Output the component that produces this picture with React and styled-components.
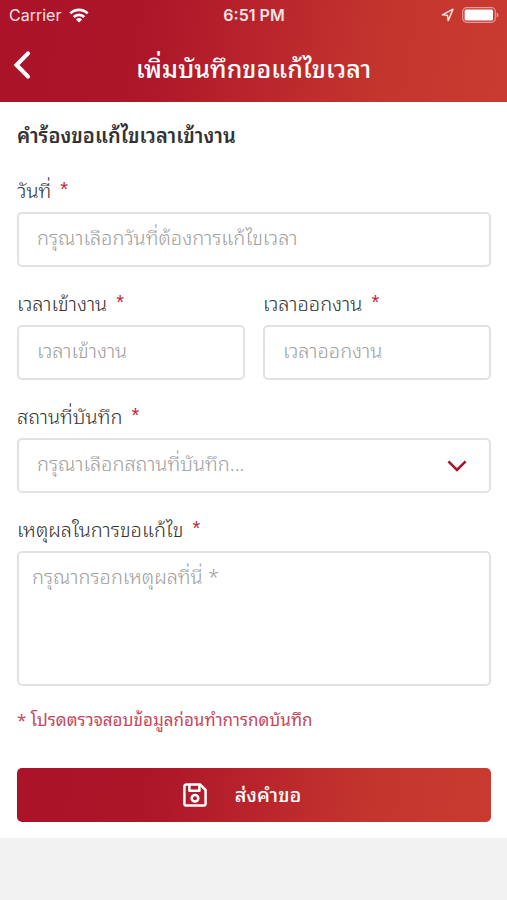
import React from "react";
import styled, { createGlobalStyle } from "styled-components";

const brandGradient = "linear-gradient(100deg, #ab1329 0%, #ad1529 28%, #b9242c 50%, #c4352e 75%, #c93a30 100%)";

const GlobalStyle = createGlobalStyle`
  * { box-sizing: border-box; }
  body {
    margin: 0;
    background: #f2f2f2;
    font-family: "Noto Sans Thai Looped", "Loma", "Liberation Sans", sans-serif;
    font-weight: 300;
    color: #333;
  }
  input, select, textarea, button { font: inherit; margin: 0; }
`;

const Header = styled.header`
  background: ${brandGradient};
  color: #fff;
`;

const StatusBar = styled.div`
  display: grid;
  grid-template-columns: 1fr auto 1fr;
  align-items: center;
  height: 30px;
  padding: 0 8px 0 9px;
  font-family: "Inter", sans-serif;
  font-size: 16px;
  font-weight: 400;
  line-height: 20px;
  color: #fbe3e4;
`;

const StatusGroup = styled.div`
  display: flex;
  align-items: center;
  justify-content: ${(p) => (p.$end ? "flex-end" : "flex-start")};
  gap: 8px;
`;

const Clock = styled.time`
  font-weight: 600;
`;

const NavBar = styled.div`
  display: grid;
  grid-template-columns: 44px 1fr 44px;
  align-items: center;
  height: 72px;
`;

const BackButton = styled.button`
  display: flex;
  justify-content: flex-start;
  align-items: center;
  height: 44px;
  padding: 0 0 0 12px;
  margin-bottom: 2px;
  border: 0;
  background: none;
  color: inherit;
`;

const Title = styled.h1`
  margin: 0;
  padding-top: 2px;
  font-size: 25px;
  line-height: 40px;
  font-weight: 500;
  text-align: center;
`;

const Form = styled.form`
  display: flex;
  flex-direction: column;
  padding: 16px 16px 16px 17px;
  background: #fff;
`;

const SectionTitle = styled.h2`
  margin: 0 0 20px;
  font-size: 20px;
  line-height: 32px;
  font-weight: 600;
  color: #333;
`;

const Field = styled.div`
  display: flex;
  flex-direction: column;
  min-width: 0;
  margin-bottom: 16px;
`;

const FieldRow = styled.div`
  display: grid;
  grid-template-columns: 1fr 1fr;
  gap: 18px;
`;

const Label = styled.label`
  display: flex;
  gap: 9px;
  margin-bottom: 4px;
  font-size: 20px;
  line-height: 38px;
`;

const Required = styled.span`
  font-family: "Liberation Sans", sans-serif;
  color: #c2243c;
`;

const controlStyle = `
  width: 100%;
  border: 2px solid #e2e2e2;
  border-radius: 5px;
  background: #fff;
  color: #a0a0a0;
  outline: none;
  &::placeholder { color: #a0a0a0; opacity: 1; }
`;

const TextInput = styled.input`
  ${controlStyle}
  height: 55px;
  padding: 0 18px 8px;
  font-size: 20px;
`;

const SelectBox = styled.div`
  display: grid;
  align-items: center;
  > * { grid-area: 1 / 1; }
  > svg { justify-self: end; margin-right: 24px; pointer-events: none; }
`;

const Select = styled.select`
  ${controlStyle}
  appearance: none;
  height: 55px;
  padding: 0 48px 8px 18px;
  font-size: 20px;
`;

const TextArea = styled.textarea`
  ${controlStyle}
  display: block;
  height: 135px;
  padding: 6px 13px;
  font-size: 20px;
  line-height: 32px;
  resize: none;
`;

const Note = styled.p`
  margin: 0 0 32px;
  font-size: 17px;
  line-height: 34px;
  font-weight: 400;
  color: #c5485c;
`;

const SubmitButton = styled.button`
  display: flex;
  align-items: center;
  justify-content: center;
  gap: 28px;
  height: 54px;
  padding: 0 24px 0 0;
  border: 0;
  border-radius: 5px;
  background: ${brandGradient};
  color: #fff;
  font-size: 20px;
  line-height: 32px;
  font-weight: 500;
`;

const ButtonText = styled.span`
  padding-bottom: 4px;
`;

const WifiIcon = () => (
  <svg width="20" height="15" viewBox="0 0 20 15" fill="#fff" aria-hidden="true">
    <path d="M10 14.6 6.9 11.4a4.6 4.6 0 0 1 6.2 0Z" />
    <path d="M4.7 9a7.6 7.6 0 0 1 10.6 0M1.3 5.4a12.5 12.5 0 0 1 17.4 0" fill="none" stroke="#fff" strokeWidth="2.6" />
  </svg>
);

const LocationIcon = () => (
  <svg width="13" height="14" viewBox="0 0 13 14" fill="none" stroke="#fbe3e4" strokeWidth="1.5" strokeLinejoin="round" aria-hidden="true">
    <path d="M12 1.2 1.4 6.8 6.4 7.2 7.2 12.6Z" />
  </svg>
);

const BatteryIcon = () => (
  <svg width="37" height="16" viewBox="0 0 37 16" aria-hidden="true">
    <rect x="0.7" y="0.7" width="32.6" height="14.6" rx="4" fill="none" stroke="#e59a9a" strokeWidth="1.2" />
    <rect x="2.6" y="2.6" width="28.4" height="10.8" rx="1.5" fill="#fff" />
    <path d="M34.6 5.4c2.4.8 2.4 4.4 0 5.2Z" fill="#e59a9a" />
  </svg>
);

const BackIcon = () => (
  <svg width="20" height="30" viewBox="0 0 20 30" fill="none" stroke="#fff" strokeWidth="4.2" strokeLinecap="round" strokeLinejoin="miter" aria-hidden="true">
    <path d="M16 3.4 4.6 15 16 26.6" />
  </svg>
);

const ChevronIcon = () => (
  <svg width="20" height="12" viewBox="0 0 20 12" fill="none" stroke="#a8152c" strokeWidth="2.6" aria-hidden="true">
    <path d="M1.4 1.4 10 10 18.6 1.4" />
  </svg>
);

const SaveIcon = () => (
  <svg width="24" height="24" viewBox="0 0 24 24" fill="none" stroke="#fff" strokeWidth="2.5" strokeLinejoin="round" aria-hidden="true">
    <path d="M3.4 1.4H17L22.6 7V20.8a1.8 1.8 0 0 1-1.8 1.8H3.2a1.8 1.8 0 0 1-1.8-1.8V3.2a1.8 1.8 0 0 1 2-1.8Z" />
    <path d="M6.4 1.6V7.8H16.4V1.6" />
    <circle cx="12" cy="15.2" r="3.3" />
  </svg>
);

function FieldLabel({ id, children }) {
  return (
    <Label htmlFor={id}>
      {children}
      <Required>*</Required>
    </Label>
  );
}

export default function App() {
  return (
    <>
      <GlobalStyle />
      <Header>
        <StatusBar>
          <StatusGroup>
            Carrier
            <WifiIcon />
          </StatusGroup>
          <Clock>6:51 PM</Clock>
          <StatusGroup $end>
            <LocationIcon />
            <BatteryIcon />
          </StatusGroup>
        </StatusBar>
        <NavBar>
          <BackButton type="button" aria-label="ย้อนกลับ">
            <BackIcon />
          </BackButton>
          <Title>เพิ่มบันทึกขอแก้ไขเวลา</Title>
        </NavBar>
      </Header>
      <Form onSubmit={(e) => e.preventDefault()}>
        <SectionTitle>คำร้องขอแก้ไขเวลาเข้างาน</SectionTitle>
        <Field>
          <FieldLabel id="date">วันที่</FieldLabel>
          <TextInput id="date" placeholder="กรุณาเลือกวันที่ต้องการแก้ไขเวลา" />
        </Field>
        <FieldRow>
          <Field>
            <FieldLabel id="time-in">เวลาเข้างาน</FieldLabel>
            <TextInput id="time-in" placeholder="เวลาเข้างาน" />
          </Field>
          <Field>
            <FieldLabel id="time-out">เวลาออกงาน</FieldLabel>
            <TextInput id="time-out" placeholder="เวลาออกงาน" />
          </Field>
        </FieldRow>
        <Field>
          <FieldLabel id="place">สถานที่บันทึก</FieldLabel>
          <SelectBox>
            <Select id="place" defaultValue="">
              <option value="">กรุณาเลือกสถานที่บันทึก...</option>
            </Select>
            <ChevronIcon />
          </SelectBox>
        </Field>
        <Field>
          <FieldLabel id="reason">เหตุผลในการขอแก้ไข</FieldLabel>
          <TextArea id="reason" placeholder="กรุณากรอกเหตุผลที่นี่ *" />
        </Field>
        <Note>* โปรดตรวจสอบข้อมูลก่อนทำการกดบันทึก</Note>
        <SubmitButton type="submit">
          <SaveIcon />
          <ButtonText>ส่งคำขอ</ButtonText>
        </SubmitButton>
      </Form>
    </>
  );
}
